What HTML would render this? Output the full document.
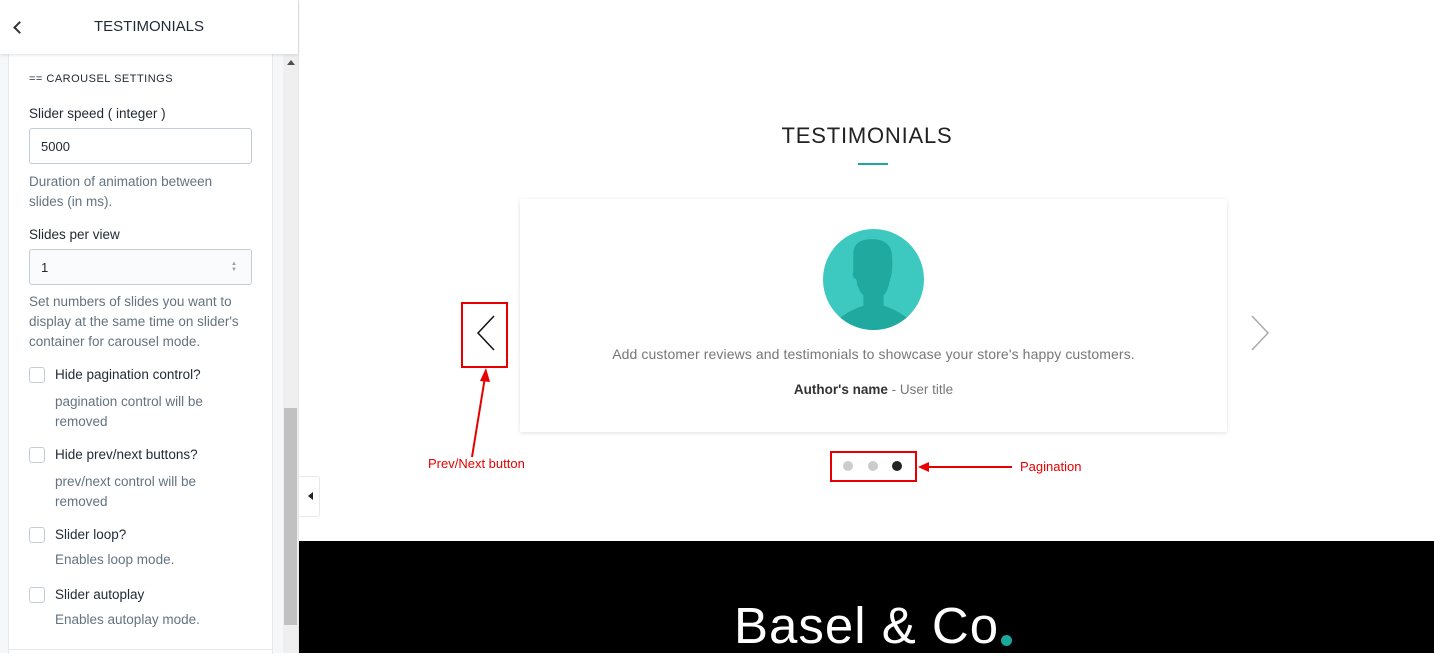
<!DOCTYPE html>
<html><head><meta charset="utf-8"><style>
*{margin:0;padding:0;box-sizing:border-box}
body{width:1434px;height:653px;overflow:hidden;background:#fff;font-family:"Liberation Sans",sans-serif;position:relative}
.side{position:absolute;left:0;top:0;width:299px;height:653px;background:#f6f7f9;border-right:1px solid #e3e5e8}
.hdr{position:absolute;left:0;top:0;width:298px;height:54px;background:#fff;box-shadow:0 1px 3px rgba(0,0,0,.12);z-index:2}
.hdr .t{position:absolute;left:0;width:298px;top:18px;text-align:center;font-size:15px;color:#212b36}
.hdr .b{position:absolute;left:15px;top:23px;width:9px;height:9px;border-left:2px solid #333;border-bottom:2px solid #333;transform:rotate(45deg)}
.panel{position:absolute;left:8px;top:54px;width:265px;height:600px;background:#fff;border-left:1px solid #e6e8eb;border-right:1px solid #e6e8eb}
.sb{position:absolute;left:283px;top:54px;width:15px;height:599px;background:#efefef}
.thumb{position:absolute;left:284px;top:408px;width:13px;height:217px;background:#c1c1c1}
.s{position:absolute;left:29px;font-size:13.5px;color:#212b36;white-space:nowrap}
.h{color:#637381}
.inp{position:absolute;left:29px;width:223px;height:36px;border:1px solid #c4cdd5;border-radius:3px;font-size:13px;padding:10px 11px;color:#212b36}
.cb{position:absolute;left:29px;width:16px;height:16px;border:1px solid #c4cdd5;border-radius:3px;background:#fff}
.abs{position:absolute}
</style></head><body>
<div class="side"></div>
<div class="panel"></div>
<div class="hdr"><div class="b"></div><div class="t">TESTIMONIALS</div></div>
<div class="sb"></div><div class="thumb"></div>
<div class="abs" style="left:287px;top:60px;width:0;height:0;border-left:4px solid transparent;border-right:4px solid transparent;border-bottom:5px solid #505050"></div>
<div class="s" style="top:73px;font-size:11px;letter-spacing:.5px">== CAROUSEL SETTINGS</div>
<div class="s" style="top:106px">Slider speed ( integer )</div>
<div class="inp" style="top:128px">5000</div>
<div class="s h" style="top:172px;line-height:20px">Duration of animation between<br>slides (in ms).</div>
<div class="s" style="top:227px">Slides per view</div>
<div class="inp" style="top:249px;background:#fafbfc">1<span style="position:absolute;right:14px;top:11px;font-size:6px;color:#919eab;line-height:6px">▲<br>▼</span></div>
<div class="s h" style="top:292px;line-height:20px">Set numbers of slides you want to<br>display at the same time on slider's<br>container for carousel mode.</div>
<div class="cb" style="top:367px"></div><div class="s" style="left:55px;top:367px">Hide pagination control?</div>
<div class="s h" style="left:55px;top:392px;line-height:20px">pagination control will be<br>removed</div>
<div class="cb" style="top:447px"></div><div class="s" style="left:55px;top:447px">Hide prev/next buttons?</div>
<div class="s h" style="left:55px;top:472px;line-height:20px">prev/next control will be<br>removed</div>
<div class="cb" style="top:527px"></div><div class="s" style="left:55px;top:527px">Slider loop?</div>
<div class="s h" style="left:55px;top:552px">Enables loop mode.</div>
<div class="cb" style="top:587px"></div><div class="s" style="left:55px;top:587px">Slider autoplay</div>
<div class="s h" style="left:55px;top:612px">Enables autoplay mode.</div>
<div class="abs" style="left:8px;top:649px;width:265px;border-top:1px solid #e6e8eb"></div>
<div class="abs" style="left:299px;top:476px;width:21px;height:41px;background:#fff;border:1px solid #e6e8eb;border-left:none;border-radius:0 3px 3px 0"></div>
<div class="abs" style="left:308px;top:492px;border-top:4px solid transparent;border-bottom:4px solid transparent;border-right:5px solid #222"></div>
<div class="abs" style="left:300px;width:1134px;top:123px;text-align:center;font-size:22px;letter-spacing:.8px;color:#222">TESTIMONIALS</div>
<div class="abs" style="left:858px;top:163px;width:30px;height:2px;background:#1aa99c"></div>
<div class="abs" style="left:520px;top:199px;width:707px;height:233px;background:#fff;box-shadow:0 1px 4px rgba(0,0,0,.12)"></div>
<svg class="abs" style="left:823px;top:229px" width="101" height="101" viewBox="0 0 100 100">
<defs><clipPath id="c"><circle cx="50" cy="50" r="50"/></clipPath></defs>
<circle cx="50" cy="50" r="50" fill="#3ec9c0"/>
<g clip-path="url(#c)" fill="#1fa99f"><path d="M30 22 Q32 10 48 10 Q66 10 68 24 Q70 40 66 52 Q64 62 60 66 L60 76 Q80 82 96 100 L4 100 Q20 82 40 76 L40 66 Q34 60 33 50 Q28 48 30 42 Z"/></g></svg>
<div class="abs" style="left:520px;width:707px;top:346px;text-align:center;font-size:14px;color:#777;letter-spacing:.1px">Add customer reviews and testimonials to showcase your store's happy customers.</div>
<div class="abs" style="left:520px;width:707px;top:382px;text-align:center;font-size:13.5px;color:#777"><b style="color:#333">Author's name</b> - User title</div>
<div class="abs" style="left:461px;top:302px;width:47px;height:66px;border:2px solid #e60000"></div>
<svg class="abs" style="left:474px;top:313px" width="24" height="40"><path d="M20 3 L4 20 L20 37" fill="none" stroke="#111" stroke-width="1.5"/></svg>
<svg class="abs" style="left:1248px;top:313px" width="24" height="40"><path d="M4 3 L20 20 L4 37" fill="none" stroke="#aaa" stroke-width="1.5"/></svg>
<div class="abs" style="left:830px;top:451px;width:87px;height:31px;border:2px solid #e60000"></div>
<div class="abs" style="left:843px;top:461px;width:10px;height:10px;border-radius:50%;background:#ccc"></div>
<div class="abs" style="left:868px;top:461px;width:10px;height:10px;border-radius:50%;background:#ccc"></div>
<div class="abs" style="left:892px;top:461px;width:10px;height:10px;border-radius:50%;background:#222"></div>
<svg class="abs" style="left:915px;top:455px" width="100" height="24"><path d="M97 12 L10 12" stroke="#e60000" stroke-width="2"/><path d="M3 12 L14 7 L14 17 Z" fill="#e60000"/></svg>
<div class="abs" style="left:1020px;top:459px;font-size:13px;color:#e60000">Pagination</div>
<svg class="abs" style="left:465px;top:365px" width="30" height="95"><path d="M7 92 L20 12" stroke="#e60000" stroke-width="2"/><path d="M21 3 L15 16 L25 17 Z" fill="#e60000"/></svg>
<div class="abs" style="left:428px;top:456px;font-size:13px;color:#e60000">Prev/Next button</div>
<div class="abs" style="left:299px;top:541px;width:1135px;height:112px;background:#000"></div>
<div class="abs" style="left:734px;top:596px;font-size:51px;color:#fff;letter-spacing:1px;line-height:60px;white-space:nowrap">Basel &amp; Co</div>
<div class="abs" style="left:1001px;top:635px;width:11px;height:11px;border-radius:50%;background:#1aa99c"></div>
</body></html>
